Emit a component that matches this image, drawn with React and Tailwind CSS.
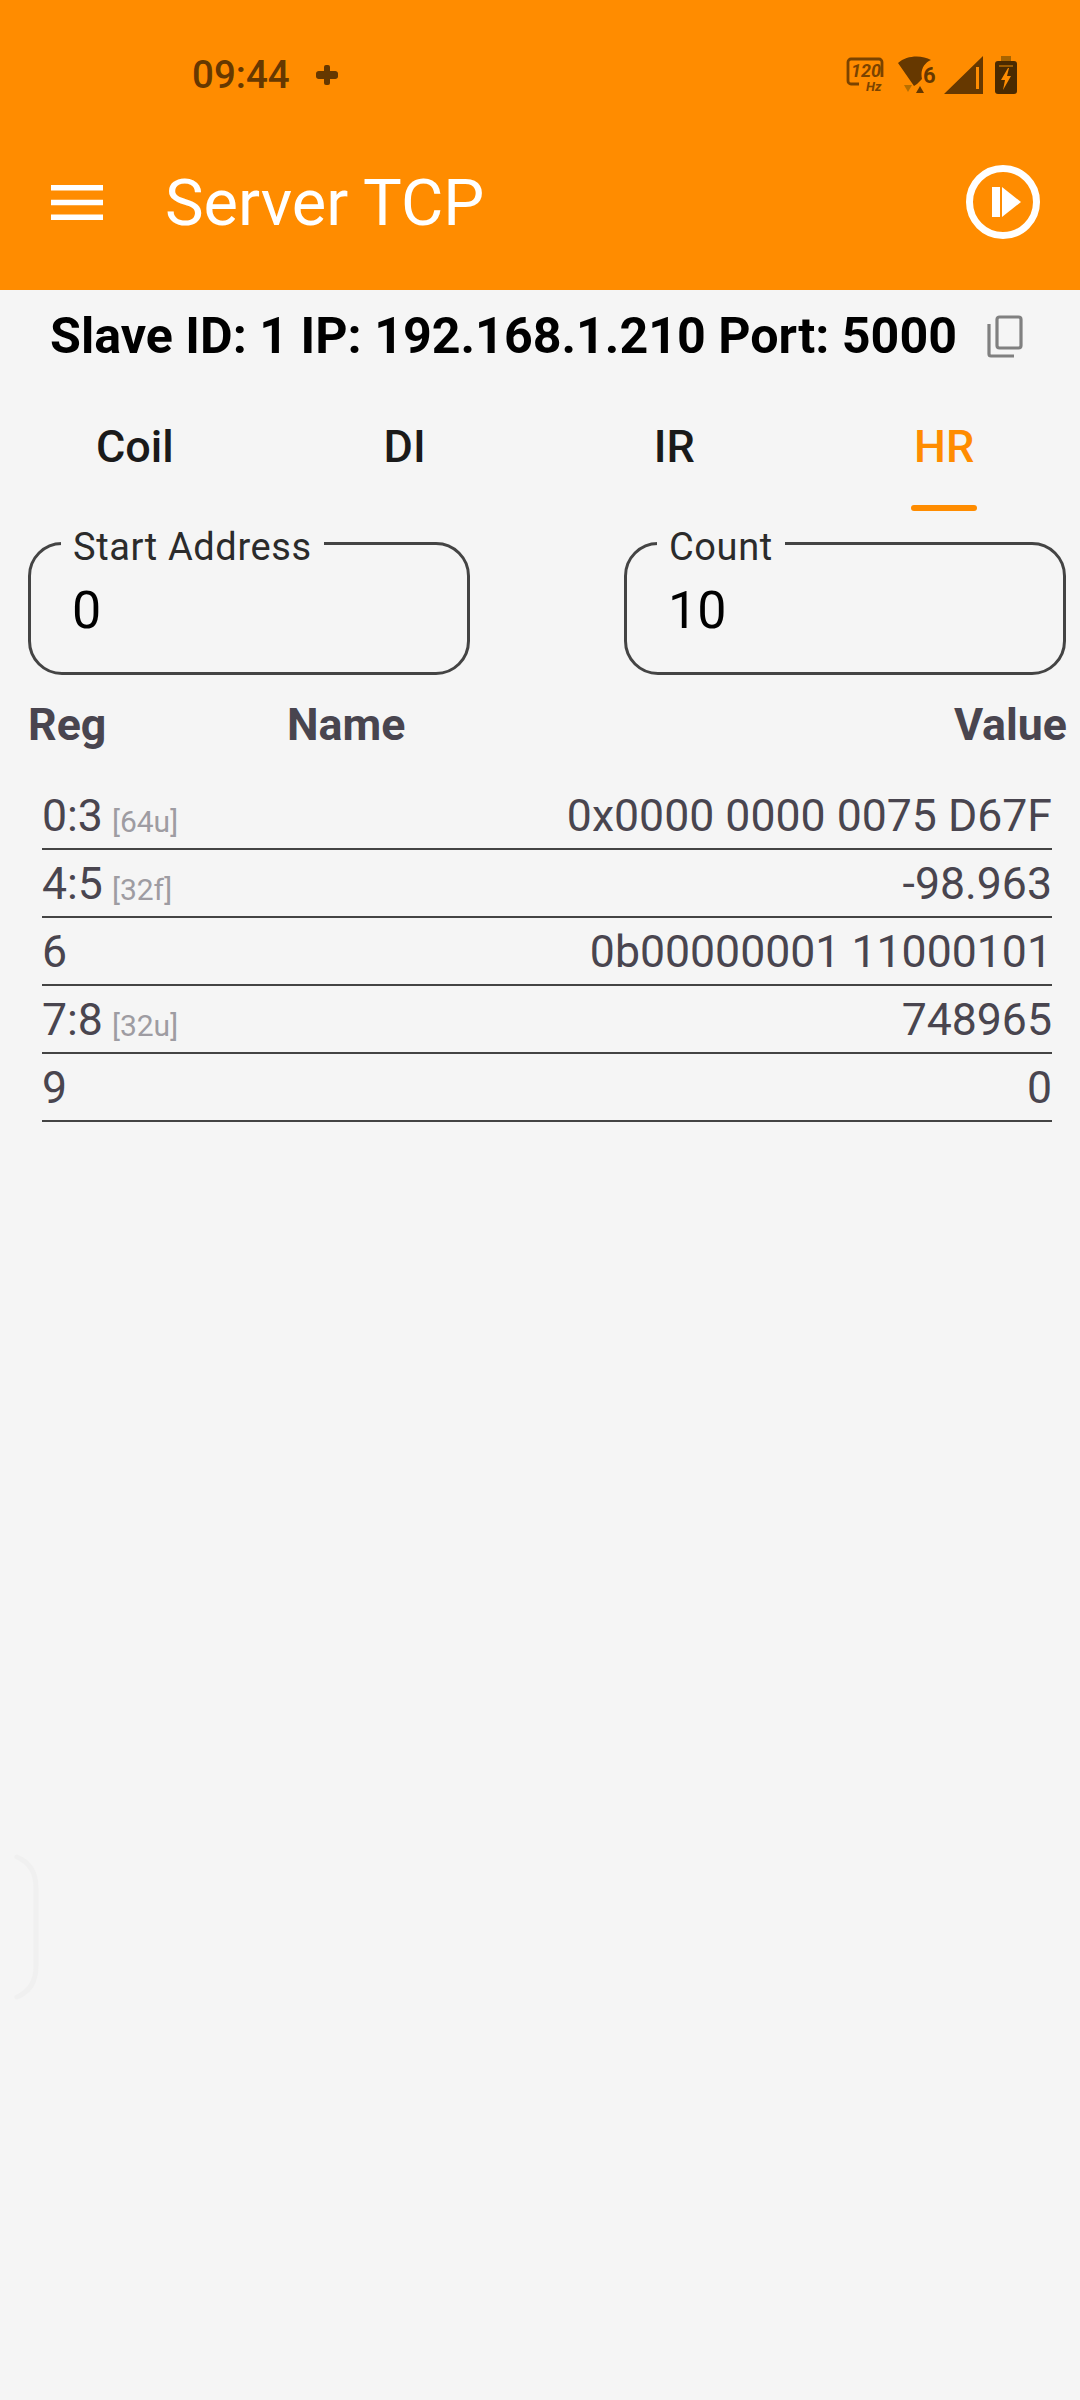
import React from "react";

const rows = [
  ["0:3", "[64u]", "0x0000 0000 0075 D67F"],
  ["4:5", "[32f]", "-98.963"],
  ["6", "", "0b00000001 11000101"],
  ["7:8", "[32u]", "748965"],
  ["9", "", "0"],
];

function Field({ label, value }) {
  return (
    <div className="relative h-[133px] w-[442px] rounded-[34px] border-[3px] border-[#444444] pl-[41px] pt-[36px] text-[52px] leading-[60px] text-black">
      <span className="absolute left-[30px] top-[-17px] bg-[#f5f5f5] px-[12px] text-[38px] leading-[38px] tracking-[0.6px] text-[#2b2b2b]">
        {label}
      </span>
      {value}
    </div>
  );
}

function StatusIcons() {
  return (
    <div className="flex items-center pb-[3px]">
      <svg width="38" height="36" viewBox="0 0 38 36" fill="none">
        <path d="M13 27H5a3 3 0 0 1-3-3V5a3 3 0 0 1 3-3h28a3 3 0 0 1 3 3v15" stroke="#7a4300" strokeWidth="2.8" />
        <text x="5" y="20" fontSize="18" fontWeight="700" fontStyle="italic" fontFamily="Roboto" fill="#7a4300">120</text>
        <text x="20" y="34" fontSize="13" fontWeight="700" fontStyle="italic" fontFamily="Roboto" fill="#7a4300">Hz</text>
      </svg>
      <svg className="ml-[14px]" width="38" height="38" viewBox="0 0 38 38">
        <path d="M0 7C9 -1 24 -1 33 4C26 7 22 14 24 23L19 28L16 30Z" fill="#663800" />
        <text x="25" y="27" fontSize="22" fontWeight="700" fontFamily="Roboto" fill="#663800">6</text>
        <path d="M6 29h8l-4 7z" fill="#b86f00" />
        <path d="M18 37h8l-4-7z" fill="#663800" />
      </svg>
      <svg className="ml-[8px]" width="40" height="38" viewBox="0 0 40 38">
        <path d="M0 38L39 0V38ZM32 11V33H35V11Z" fill="#663800" fillRule="evenodd" />
      </svg>
      <svg className="ml-[11px]" width="22" height="38" viewBox="0 0 22 38">
        <rect x="6" y="0" width="10" height="5" fill="#a86400" />
        <rect x="0" y="5" width="22" height="33" rx="3" fill="#4a2a00" />
        <path d="M4 9h14v2H4z" fill="#9a5a00" />
        <path d="M13 12L6 24h4l-2 10 8-14h-4l2-8z" fill="#ff8c00" />
      </svg>
    </div>
  );
}

export default function App() {
  return (
    <div className="relative min-h-[2400px] w-[1080px] overflow-hidden bg-[#f5f5f5] font-['Roboto',sans-serif]">
      <header className="h-[290px] bg-[#ff8c00]">
        <div className="flex h-[100px] items-end justify-between pb-[3px] pl-[192px] pr-[63px]">
          <div className="flex items-center gap-[26px] text-[#663800]">
            <span className="text-[38.5px] font-medium leading-[44px]">09:44</span>
            <svg width="22" height="20" viewBox="0 0 22 20"><path d="M8 2a2 2 0 0 1 2-2h2a2 2 0 0 1 2 2v4h5a2.8 2.8 0 0 1 3 3v2a2.8 2.8 0 0 1-3 3h-5v4a2 2 0 0 1-2 2h-2a2 2 0 0 1-2-2v-4H3a2.8 2.8 0 0 1-3-3V9a2.8 2.8 0 0 1 3-3h5z" fill="#663800" /></svg>
          </div>
          <StatusIcons />
        </div>
        <div className="flex h-[204px] items-center pl-[51px] pr-[40px]">
          <svg width="52" height="35" viewBox="0 0 52 35" fill="#fff">
            <rect y="0" width="52" height="5.5" />
            <rect y="14.75" width="52" height="5.5" />
            <rect y="29.5" width="52" height="5.5" />
          </svg>
          <span className="ml-[62px] flex-1 pt-[2px] text-[65px] leading-[70px] text-white">Server TCP</span>
          <svg width="74" height="74" viewBox="0 0 74 74" fill="none">
            <circle cx="37" cy="37" r="33.5" stroke="#fff" strokeWidth="7" />
            <rect x="26" y="22" width="8" height="30" fill="#fff" />
            <path d="M36 22L55 37L36 52Z" fill="#fff" />
          </svg>
        </div>
      </header>

      <div className="flex h-[88px] items-center pl-[50px] pt-[4px]">
        <span className="text-[50.2px] font-bold leading-[60px] text-black">Slave ID: 1 IP: 192.168.1.210 Port: 5000</span>
        <svg className="ml-[30px]" width="36" height="43" viewBox="0 0 36 43" fill="none" stroke="#808080" strokeWidth="3.2">
          <rect x="10" y="2" width="24" height="31" rx="2.5" />
          <path d="M2 9V39a2 2 0 0 0 2 2H27" />
        </svg>
      </div>

      <nav className="grid h-[133px] grid-cols-4 pr-[1px]">
        {["Coil", "DI", "IR", "HR"].map((t) => (
          <div key={t} className={"relative flex justify-center pt-[44px] text-[45px] font-medium leading-[50px] " + (t === "HR" ? "text-[#ff8c00]" : "text-[#1a1a1a]")}>
            {t}
            {t === "HR" && <span className="absolute bottom-0 left-1/2 h-[6px] w-[66px] -translate-x-1/2 rounded-full bg-[#ff8c00]" />}
          </div>
        ))}
      </nav>

      <div className="mt-[31px] flex justify-between pl-[28px] pr-[14px]">
        <Field label="Start Address" value="0" />
        <Field label="Count" value="10" />
      </div>

      <div className="mt-[20px] grid h-[60px] grid-cols-[259px_1fr_auto] items-center pl-[28px] pr-[13px] text-[44.7px] font-bold leading-[60px] text-[#49454f]">
        <span>Reg</span>
        <span>Name</span>
        <span>Value</span>
      </div>

      <div className="mt-[27px] pl-[42px] pr-[28px]">
        {rows.map(([reg, tag, val]) => (
          <div key={reg} className="flex h-[68px] items-center justify-between border-b-2 border-[#444444] pt-[2px] text-[44.6px] leading-[60px] text-[#49454f]">
            <span>
              {reg}
              {tag && <span className="relative top-[1px] ml-[9px] text-[30px] leading-none text-[#9e9ca2]">{tag}</span>}
            </span>
            <span>{val}</span>
          </div>
        ))}
      </div>

      <svg className="absolute left-[13px] top-[1852px]" width="28" height="150" viewBox="0 0 28 150" fill="none">
        <path d="M4 5C16 10 23 20 23 36V114C23 130 16 140 4 145" stroke="#f0f0f0" strokeWidth="5" strokeLinecap="round" />
      </svg>
    </div>
  );
}
